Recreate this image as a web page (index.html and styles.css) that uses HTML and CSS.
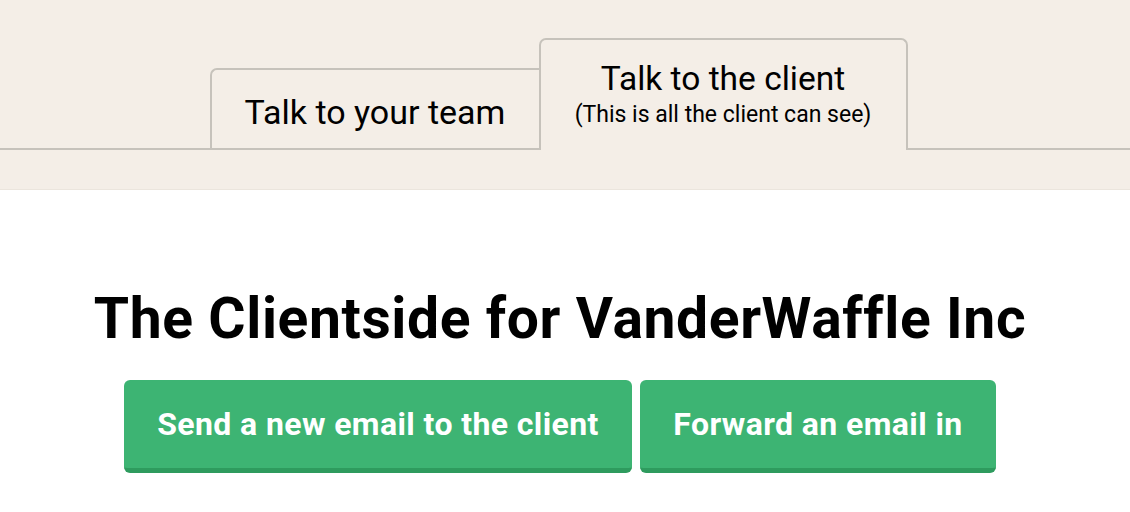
FILE: index.html
```
<!DOCTYPE html>
<html lang="en">
<head>
    <meta charset="UTF-8">
    <meta name="viewport" content="width=device-width, initial-scale=1.0">
    <title>Clientside</title>
    <link rel="stylesheet" href="styles.css">
</head>
<body>

<div class="tabs-band">
    <div class="tabs">
        <a class="tab" href="#">Talk to your team</a>
        <a class="tab active" href="#">
            <span class="tab-title">Talk to the client</span>
            <span class="tab-note">(This is all the client can see)</span>
        </a>
    </div>
</div>

<div class="main">
    <h1>The Clientside for VanderWaffle Inc</h1>
    <div class="actions">
        <button class="btn btn-wide">Send a new email to the client</button>
        <button class="btn">Forward an email in</button>
    </div>
</div>

</body>
</html>
```

FILE: styles.css
```
body {
    margin: 0;
    font-family: Roboto, "Liberation Sans", sans-serif;
    color: #000;
    background-color: #fff;
}

.tabs-band {
    height: 190px;
    padding-top: 38px;
    box-sizing: border-box;
    background-color: #f4eee7;
    border-bottom: 1px solid #ebe5dd;
}

.tabs {
    display: flex;
    justify-content: center;
    align-items: flex-end;
    padding-right: 13px;
    border-bottom: 2px solid #c6c2bb;
}

.tab {
    display: flex;
    flex-direction: column;
    justify-content: center;
    align-items: center;
    box-sizing: border-box;
    width: 329px;
    height: 80px;
    padding-top: 6px;
    border: 2px solid #c6c2bb;
    border-bottom: none;
    border-right: none;
    border-radius: 7px 0 0 0;
    color: #000;
    text-decoration: none;
    font-size: 34px;
    line-height: 40px;
}

.tab.active {
    width: 369px;
    height: 112px;
    margin-bottom: -2px;
    padding-top: 0;
    padding-bottom: 1px;
    border-right: 2px solid #c6c2bb;
    border-radius: 7px 7px 0 0;
    background-color: #f4eee7;
}

.tab-title {
    font-size: 33.5px;
    line-height: 40px;
}

.tab-note {
    font-size: 23px;
    line-height: 31px;
}

.main {
    padding-right: 10px;
    text-align: center;
}

h1 {
    margin: 96px 0 0;
    font-size: 57px;
    line-height: 66px;
    font-weight: 700;
    letter-spacing: 0.6px;
}

.actions {
    display: flex;
    justify-content: center;
    gap: 8px;
    margin-top: 28px;
}

.btn {
    box-sizing: border-box;
    width: 356px;
    height: 93px;
    padding: 0;
    border: none;
    border-bottom: 5px solid #2e9b5e;
    border-radius: 6px;
    background-color: #3db473;
    color: #fff;
    font-family: inherit;
    font-size: 32px;
    font-weight: 700;
    letter-spacing: 0.4px;
    cursor: pointer;
}

.btn-wide {
    width: 508px;
}
```
